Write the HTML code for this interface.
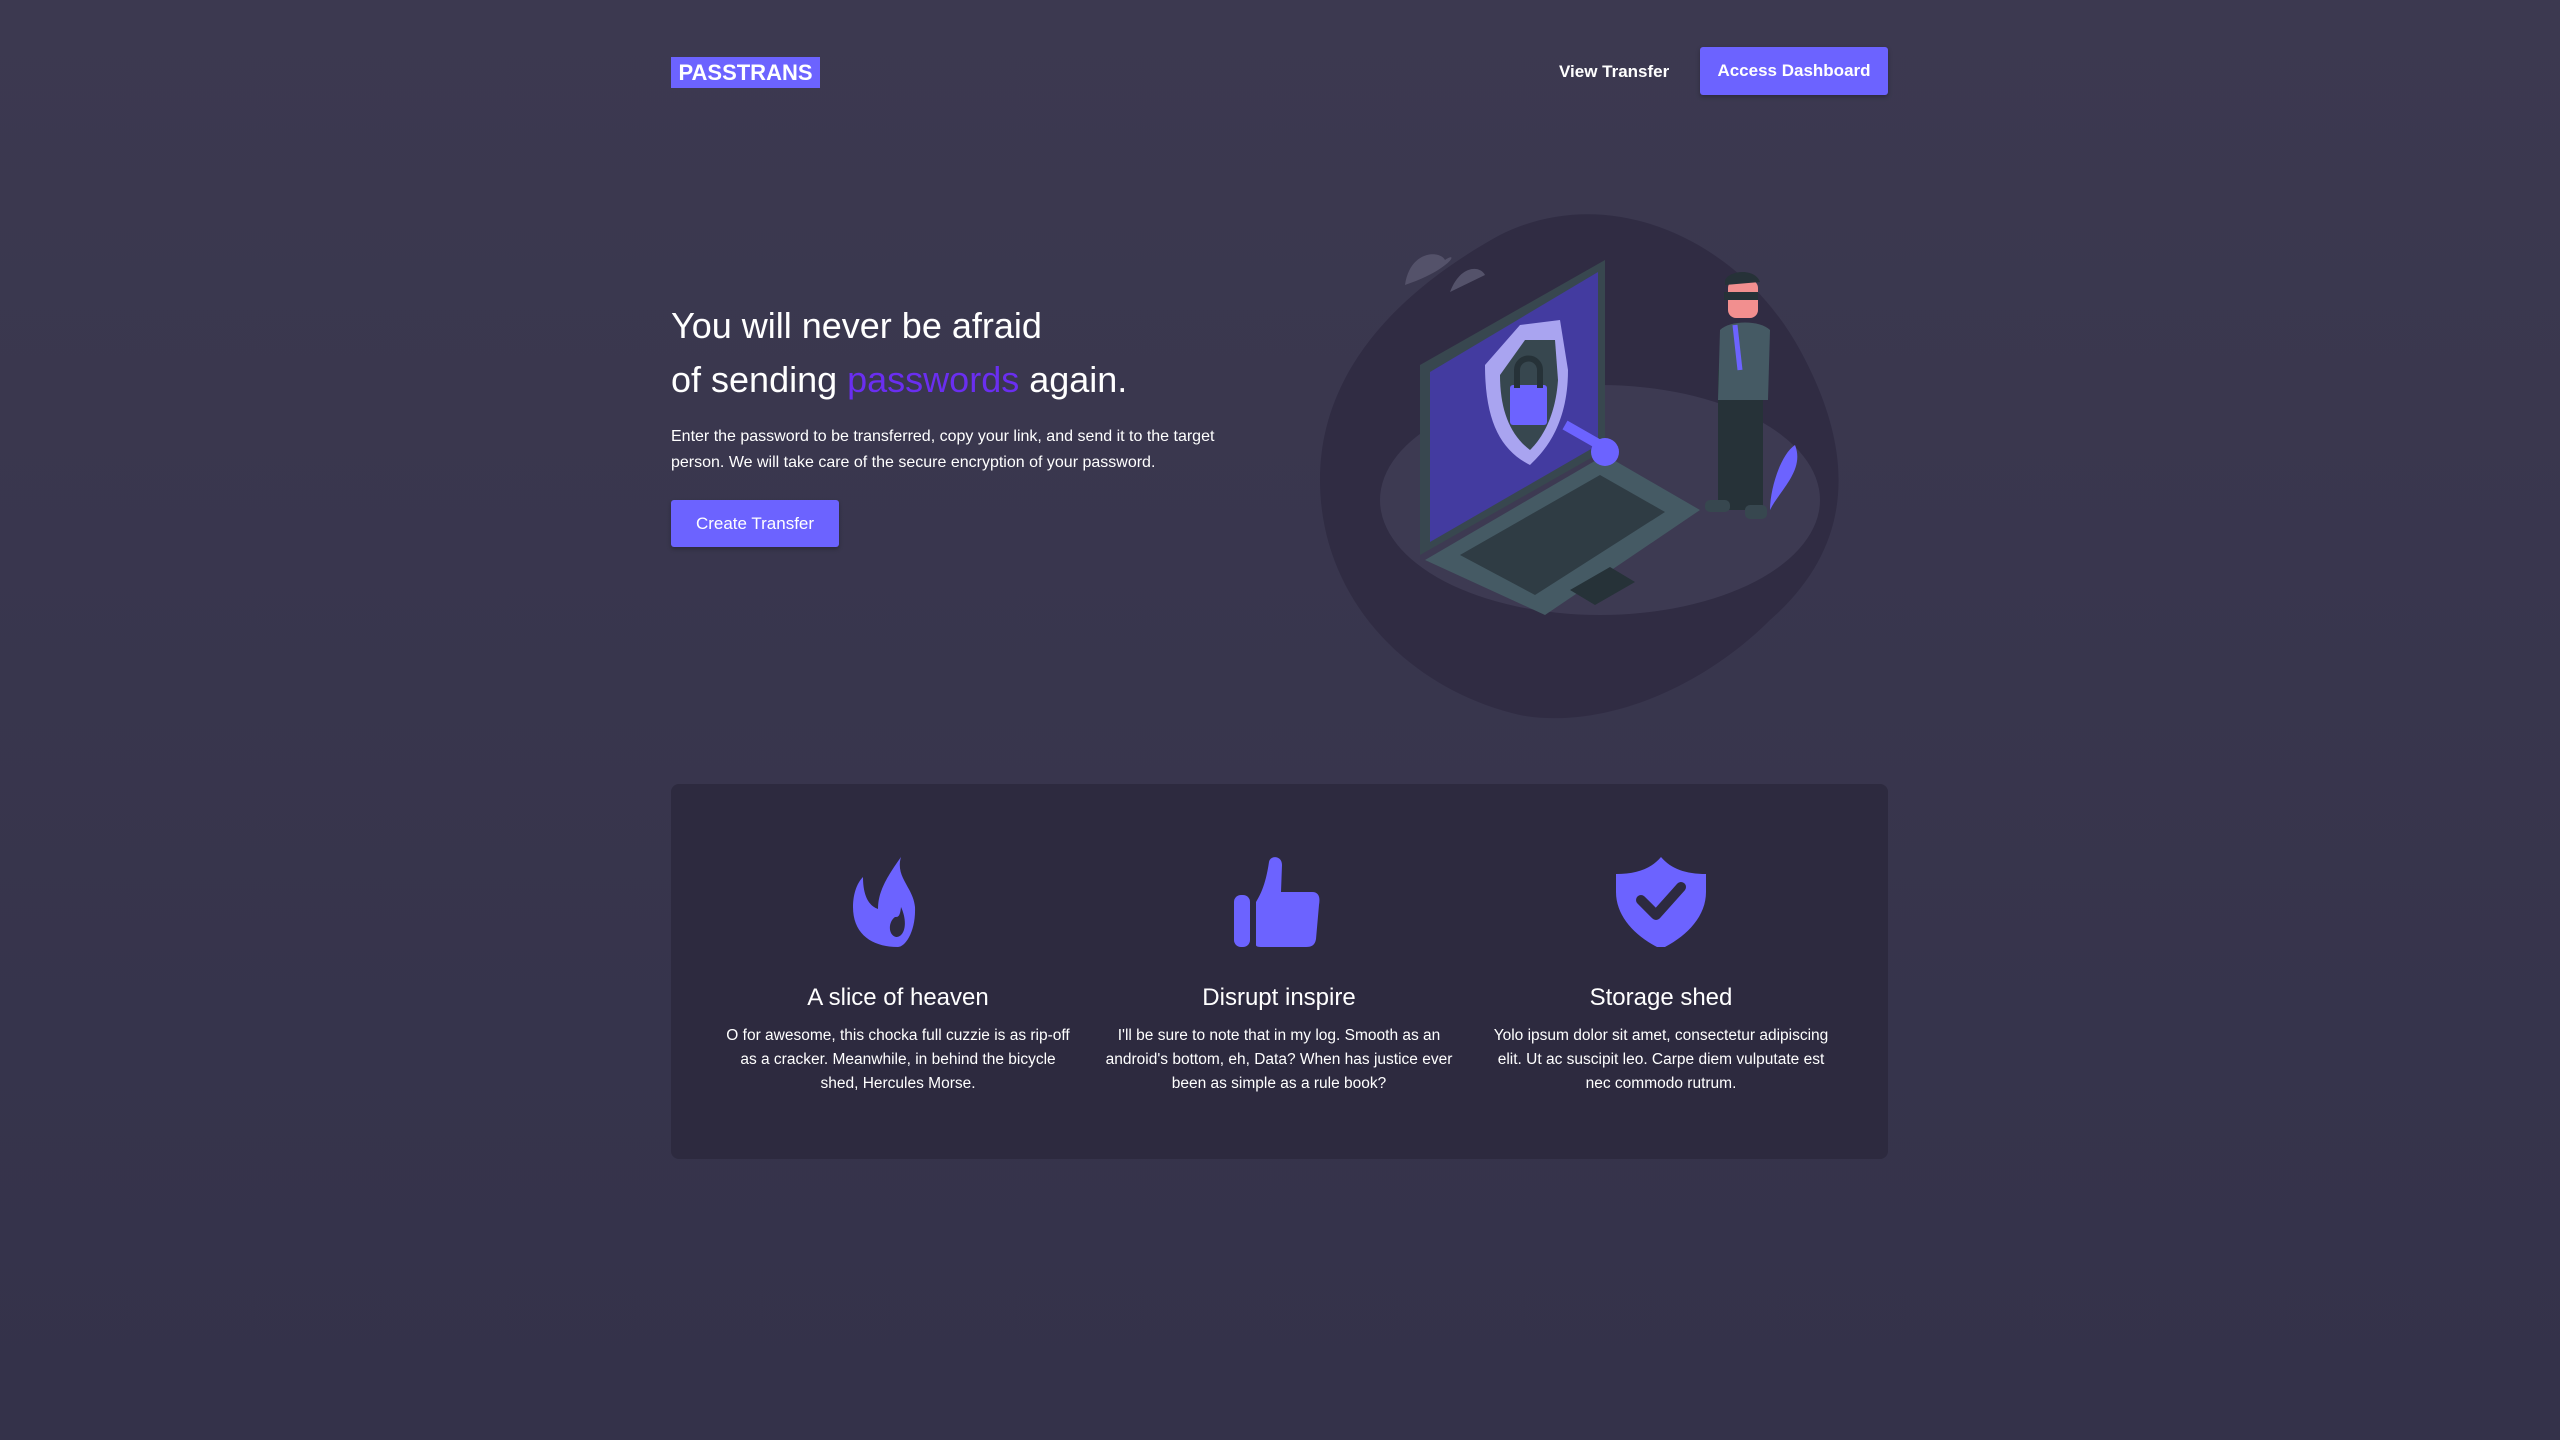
<!DOCTYPE html>
<html><head><meta charset="utf-8"><style>
*{margin:0;padding:0;box-sizing:border-box}
body{width:2560px;height:1440px;overflow:hidden;background:linear-gradient(#3c3950,#34324a);font-family:"Liberation Sans",sans-serif;color:#fff;position:relative}
.abs{position:absolute}
.logo{left:671px;top:57px;width:149px;height:31px;background:#6c63ff;font-weight:bold;font-size:22px;line-height:31px;text-align:center;letter-spacing:0px}
.nav{left:1559px;top:61px;font-size:17px;font-weight:bold;line-height:22px}
.btn{background:#6c63ff;border-radius:3px;font-size:17px;text-align:center;box-shadow:0 2px 4px rgba(0,0,0,.25)}
h1{font-weight:normal;font-size:36px;line-height:54px}
p.lead{font-size:16px;line-height:26px}
.card{left:671px;top:784px;width:1217px;height:375px;background:#2d2a3f;border-radius:8px}
.col{position:absolute;top:0;width:360px;text-align:center}
.col h3{font-weight:normal;font-size:24px;position:absolute;top:200px;width:100%}
.col p{font-size:15.5px;line-height:24px;position:absolute;top:240px;width:100%;padding:0 6px}
.col svg{position:absolute;top:73px;left:135px}
</style></head><body>
<div class="abs logo">PASSTRANS</div>
<div class="abs nav">View Transfer</div>
<div class="abs btn" style="left:1700px;top:47px;width:188px;height:48px;line-height:48px;font-weight:bold">Access Dashboard</div>
<h1 class="abs" style="left:671px;top:299px">You will never be afraid<br>of sending <span style="color:#6a2ef0">passwords</span> again.</h1>
<p class="abs lead" style="left:671px;top:424px;width:560px">Enter the password to be transferred, copy your link, and send it to the target person. We will take care of the secure encryption of your password.</p>
<div class="abs btn" style="left:671px;top:500px;width:168px;height:47px;line-height:47px">Create Transfer</div>

<svg class="abs" style="left:1300px;top:200px" width="580" height="540" viewBox="0 0 580 540">
<path d="M200 35 C310 -20 440 40 500 150 C560 260 550 350 470 420 C400 490 300 530 220 515 C110 490 20 400 20 280 C20 170 100 90 200 35Z" fill="#302c43"/>
<ellipse cx="300" cy="300" rx="220" ry="115" fill="#3d3a52"/>
<path d="M105 85 C110 50 140 50 145 60 C160 50 150 70 105 85Z" fill="#54526a"/>
<path d="M150 92 C160 65 180 65 185 75 L150 92Z" fill="#54526a"/>
<polygon points="120,165 305,60 305,250 120,355" fill="#38474f"/>
<polygon points="130,172 298,72 298,245 130,342" fill="#433ba0"/>
<polygon points="125,360 305,255 400,310 245,415" fill="#455a64"/>
<polygon points="160,355 300,275 365,312 235,395" fill="#2f3c44"/>
<polygon points="270,390 310,367 335,382 295,405" fill="#263238"/>
<path d="M185 165 L220 125 L260 120 L268 170 C268 230 240 255 230 265 C200 250 185 220 185 165Z" fill="#a9a4f0"/>
<path d="M200 175 L225 140 L255 140 L258 180 C255 225 235 245 230 250 C210 235 200 210 200 175Z" fill="#37474f"/>
<rect x="210" y="185" width="37" height="40" rx="3" fill="#6c63ff"/>
<path d="M217 188 V170 A11 11 0 0 1 240 170 V188" stroke="#263238" stroke-width="6" fill="none"/>
<path d="M265 225 L300 245" stroke="#6c63ff" stroke-width="10"/>
<circle cx="305" cy="252" r="14" fill="#6c63ff"/>
<rect x="418" y="170" width="45" height="140" fill="#263238"/>
<path d="M420 130 C430 120 460 120 470 130 L468 200 L418 200Z" fill="#455a64"/>
<rect x="428" y="80" width="30" height="38" rx="8" fill="#f28f8f"/>
<path d="M425 80 C430 70 455 68 460 82 L425 85Z" fill="#263238"/>
<rect x="424" y="92" width="34" height="8" fill="#263238"/>
<path d="M435 125 L440 170" stroke="#6c63ff" stroke-width="5"/>
<path d="M495 245 C480 255 470 290 470 310 C480 290 505 270 495 245Z" fill="#6c63ff"/>
<rect x="405" y="300" width="25" height="12" rx="5" fill="#37474f"/>
<rect x="445" y="305" width="22" height="14" rx="5" fill="#37474f"/>
</svg>

<div class="abs card">
 <div class="col" style="left:47px">
  <svg width="90" height="90" viewBox="0 0 90 90"><path d="M48 0 C42 20 60 30 62 50 C63 75 52 90 45 90 C20 90 0 78 0 50 C0 35 5 25 10 20 C10 45 20 50 25 52 C25 38 30 25 48 0Z M42 60 C35 65 35 78 43 80 C52 80 55 65 48 50 C47 60 45 60 42 60Z" fill="#6c63ff" fill-rule="evenodd"/></svg>
  <h3>A slice of heaven</h3>
  <p>O for awesome, this chocka full cuzzie is as rip-off as a cracker. Meanwhile, in behind the bicycle shed, Hercules Morse.</p>
 </div>
 <div class="col" style="left:428px">
  <svg width="90" height="90" viewBox="0 0 90 90"><rect x="0" y="38" width="16" height="52" rx="7" fill="#6c63ff"/><path d="M22 88 L22 45 C28 35 32 25 35 5 C36 -2 48 -2 48 8 L47 35 L78 35 C86 35 86 42 85 48 L82 82 C81 88 78 90 72 90 L30 90 C25 90 22 90 22 88Z" fill="#6c63ff"/></svg>
  <h3>Disrupt inspire</h3>
  <p>I'll be sure to note that in my log. Smooth as an android's bottom, eh, Data? When has justice ever been as simple as a rule book?</p>
 </div>
 <div class="col" style="left:810px">
  <svg width="90" height="90" viewBox="0 0 90 90"><path d="M45 0 C55 12 70 17 90 17 L90 35 C90 60 70 80 45 92 C20 80 0 60 0 35 L0 17 C20 17 35 12 45 0Z" fill="#6c63ff"/><path d="M25 43 L40 58 L65 30" stroke="#2d2a3f" stroke-width="10" fill="none" stroke-linecap="round" stroke-linejoin="round"/></svg>
  <h3>Storage shed</h3>
  <p>Yolo ipsum dolor sit amet, consectetur adipiscing elit. Ut ac suscipit leo. Carpe diem vulputate est nec commodo rutrum.</p>
 </div>
</div>
</body></html>
